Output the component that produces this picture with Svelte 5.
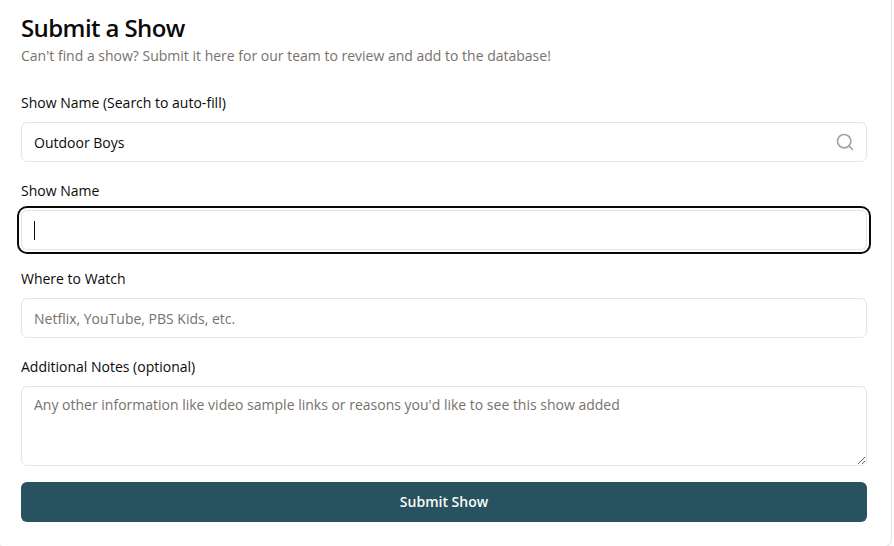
<script>
  let searchTerm = $state('Outdoor Boys');
  let showName = $state('');
  let whereToWatch = $state('');
  let notes = $state('');
</script>

<main class="card">
  <header>
    <h1>Submit a Show</h1>
    <p>Can't find a show? Submit it here for our team to review and add to the database!</p>
  </header>
  <form onsubmit={(event) => event.preventDefault()}>
    <div class="field">
      <label for="search">Show Name (Search to auto-fill)</label>
      <div class="search">
        <input id="search" bind:value={searchTerm} />
        <svg viewBox="0 0 24 24" aria-hidden="true">
          <circle cx="11" cy="11" r="8" />
          <path d="m21 21-4.3-4.3" />
        </svg>
      </div>
    </div>
    <div class="field">
      <label for="name">Show Name</label>
      <div class="focused">
        <input id="name" bind:value={showName} />
        <span class="caret"></span>
      </div>
    </div>
    <div class="field">
      <label for="where">Where to Watch</label>
      <input id="where" placeholder="Netflix, YouTube, PBS Kids, etc." bind:value={whereToWatch} />
    </div>
    <div class="field notes">
      <label for="notes">Additional Notes (optional)</label>
      <textarea id="notes" placeholder="Any other information like video sample links or reasons you'd like to see this show added" bind:value={notes}></textarea>
    </div>
    <button type="submit">Submit Show</button>
  </form>
</main>

<style>
  :global(body) { margin: 0; background: #fff; overflow: hidden; }
  .card {
    box-sizing: border-box;
    width: 896px;
    height: 547px;
    margin-left: -4px;
    padding: 12px 24px 24px;
    border: 1px solid #e5e5e5;
    border-top: 0;
    border-radius: 0 0 8px 8px;
    font-family: "Open Sans", "Noto Sans", sans-serif;
    font-size: 14px;
    line-height: 20px;
    color: #0c0a09;
    background: #fff;
  }
  h1 { margin: 0; font-size: 24px; line-height: 32px; font-weight: 600; letter-spacing: -0.6px; }
  p { margin: 2px 0 0; color: #78716c; }
  form { margin-top: 27px; display: flex; flex-direction: column; }
  .field { display: flex; flex-direction: column; gap: 9px; margin-bottom: 19px; }
  .notes { margin-bottom: 16px; }
  label { font-weight: 400; }
  input, textarea {
    box-sizing: border-box;
    display: block;
    width: 100%;
    margin: 0;
    border: 1px solid #e5e5e5;
    border-radius: 6px;
    background: #fff;
    color: #0c0a09;
    font: inherit;
    outline: none;
  }
  input { height: 40px; padding: 8px 12px; }
  textarea { height: 80px; padding: 8px 12px; resize: vertical; }
  ::placeholder { color: #78716c; opacity: 1; }
  .search, .focused { position: relative; }
  .focused input { box-shadow: 0 0 0 2px #fff, 0 0 0 4px #0c0a09; }
  .search svg {
    position: absolute;
    right: 12px;
    top: 10px;
    width: 20px;
    height: 20px;
    fill: none;
    stroke: #9ca3af;
    stroke-width: 2;
    stroke-linecap: round;
    stroke-linejoin: round;
  }
  .caret { position: absolute; left: 13px; top: 11px; width: 1px; height: 19px; background: #0c0a09; }
  button {
    height: 40px;
    border: 0;
    border-radius: 6px;
    background: #285260;
    color: #fafaf9;
    font: inherit;
    font-weight: 600;
  }
</style>
